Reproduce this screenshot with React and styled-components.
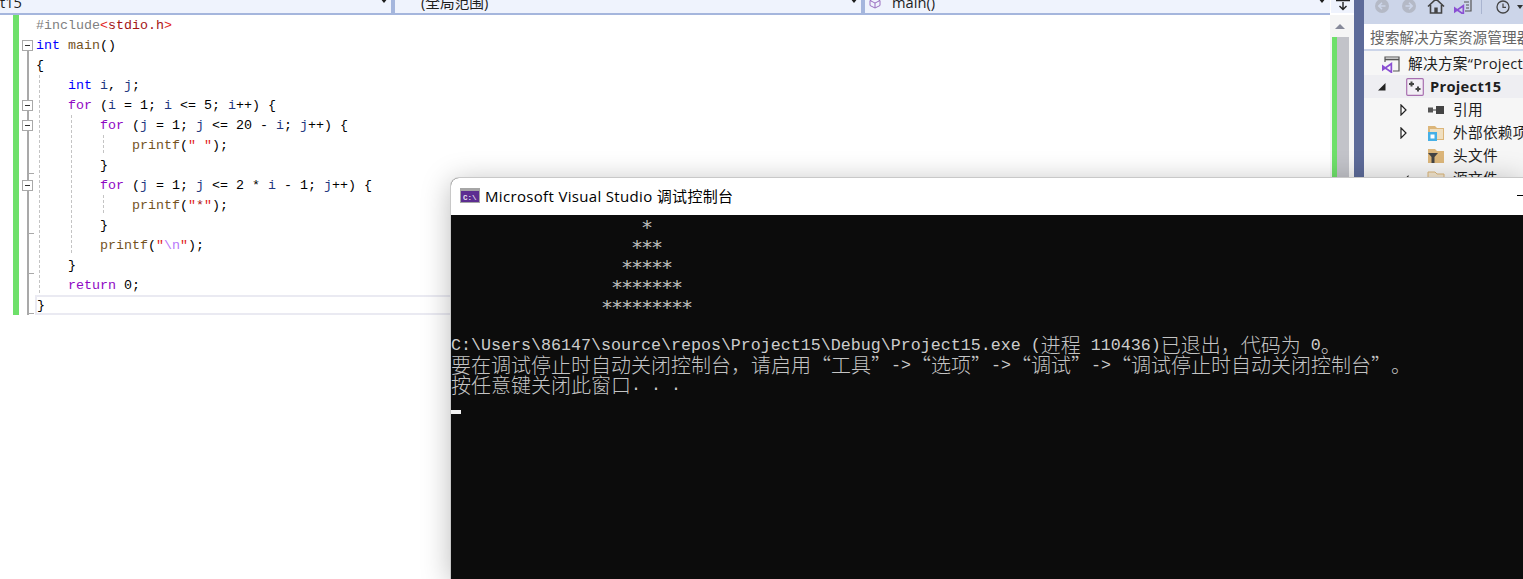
import React from 'react';
import styled, { createGlobalStyle } from 'styled-components';

const GlobalStyle = createGlobalStyle`
  html, body {
    margin: 0;
    padding: 0;
    height: 100%;
    overflow: hidden;
    background: #fff;
    text-spacing-trim: space-all;
  }
`;

const uiFont = `"Open Sans", "Noto Sans CJK SC", sans-serif`;

const tokenColors = {
  kw: '#0000ff',
  ctl: '#8f08c4',
  fn: '#74531f',
  v: '#1f377f',
  str: '#a31515',
  q: '#e21f1f',
  esc: '#b776fb',
  pre: '#808080',
  p: '#000',
};

const Desktop = styled.div`
  position: relative;
  display: flex;
  height: 100vh;
  overflow: hidden;
  background: #fff;
`;

const EditorPane = styled.div`
  display: flex;
  width: 1354px;
  flex: none;
`;

const EditorMain = styled.div`
  flex: 1;
  min-width: 0;
  display: flex;
  flex-direction: column;
`;

const NavBar = styled.div`
  display: flex;
  height: 15px;
  flex: none;
  box-sizing: border-box;
  border-bottom: 2px solid #a5b6dd;
  background: #eff3fd;
  overflow: hidden;
`;

const Combo = styled.div`
  width: ${p => p.$width}px;
  flex: none;
  display: flex;
  align-items: flex-end;
  box-sizing: border-box;
  padding: 0 ${p => p.$right}px 0 ${p => p.$left}px;
  font: 14.67px/19px ${uiFont};
  color: #1e1e1e;
  white-space: nowrap;
  border-right: 4px solid #a5b6dd;
  &:last-child { border-right: 0; }
`;

const ComboText = styled.span`
  flex: 1;
  margin-bottom: 1px;
`;

const ComboCaret = styled.i`
  width: 0;
  height: 0;
  margin-bottom: 10px;
  border-left: 4px solid transparent;
  border-right: 4px solid transparent;
  border-top: 5px solid #1e1e1e;
`;

const MethodIcon = styled.svg`
  width: 12px;
  height: 12px;
  margin: 0 11px 4px 0;
  flex: none;
`;

const EditorBody = styled.div`
  display: flex;
  padding-left: 13px;
  align-items: flex-start;
`;

const ChangeBar = styled.div`
  width: 6px;
  flex: none;
  height: 300px;
  background: #6ee06a;
`;

const FoldColumn = styled.div`
  width: 16px;
  flex: none;
  display: flex;
  flex-direction: column;
`;

const FoldCell = styled.div`
  height: 20px;
  display: flex;
  align-items: center;
  justify-content: flex-start;
  padding-left: 3px;
  background-repeat: no-repeat;
  background-image:
    ${p => (p.$line ? 'linear-gradient(#a9a9a9, #a9a9a9)' : 'none')},
    ${p => (p.$end ? 'linear-gradient(#a9a9a9, #a9a9a9)' : 'none')};
  background-size: 2px 100%, 6px 1px;
  background-position: 8px ${p => (p.$start ? '12px' : '0')}, 9px 18px;
`;

const FoldBox = styled.span`
  width: 11px;
  height: 11px;
  box-sizing: border-box;
  border: 1px solid #a9a9a9;
  background: #fff;
  display: flex;
  align-items: center;
  justify-content: center;
  &::after {
    content: '';
    width: 5px;
    height: 1px;
    background: #333;
  }
`;

const CodeColumn = styled.div`
  flex: 1;
  min-width: 0;
`;

const CodeLine = styled.div`
  height: 20px;
  box-sizing: border-box;
  display: flex;
  align-items: center;
  white-space: pre;
  padding: 1px 0 0 1px;
  font: 13.33px/18px "Liberation Mono", monospace;
  color: #000;
  ${p => p.$current && `
    border-top: 2px solid #eaeaf2;
    border-bottom: 2px solid #eaeaf2;
    border-left: 2px solid #eaeaf2;
    padding-left: 0;
  `}
`;

const Indent = styled.span`
  width: 32px;
  height: 20px;
  flex: none;
  margin-top: -1px;
  background-image: repeating-linear-gradient(#c4c4c4 0 3px, transparent 3px 5px);
  background-repeat: no-repeat;
  background-size: 1px 100%;
  background-position: 3px 0;
`;

const Tok = styled.span`
  color: ${p => tokenColors[p.$kind]};
`;

const ScrollColumn = styled.div`
  width: 24px;
  flex: none;
  display: flex;
  flex-direction: column;
  align-items: stretch;
  background: #f5f5f5;
`;

const SplitButton = styled.div`
  height: 15px;
  box-sizing: border-box;
  background: #eff3fd;
  border-left: 1px solid #fff;
  border-bottom: 2px solid #fff;
  display: flex;
  justify-content: center;
`;

const ScrollArrow = styled.div`
  height: 22px;
  display: flex;
  align-items: center;
  justify-content: center;
  &::after {
    content: '';
    border-left: 5px solid transparent;
    border-right: 5px solid transparent;
    border-bottom: 5px solid #868999;
    margin-right: 5px;
  }
`;

const ScrollTrack = styled.div`
  flex: 1;
  display: flex;
  margin-left: 2px;
  margin-right: 5px;
  background: #c2c3c9;
  &::before {
    content: '';
    width: 5px;
    background: #6ee06a;
  }
`;

const Splitter = styled.div`
  width: 10px;
  flex: none;
  background: #5d6b99;
`;

const SolutionPanel = styled.div`
  flex: 1;
  min-width: 0;
  display: flex;
  flex-direction: column;
  background: #f6f6f6;
  overflow: hidden;
`;

const PanelToolbar = styled.div`
  height: 24px;
  flex: none;
  box-sizing: border-box;
  padding: 0 0 10px 10px;
  display: flex;
  align-items: flex-end;
  background: #ccd5e9;
  overflow: hidden;
`;

const ToolIcon = styled.svg`
  width: ${p => p.$w || 16}px;
  height: 16px;
  flex: none;
  margin-right: ${p => p.$gap || 0}px;
`;

const ToolSep = styled.i`
  width: 1px;
  height: 24px;
  flex: none;
  margin: 0 13px 0 0;
  background: #a9b4d0;
`;

const ToolCaret = styled.i`
  width: 0;
  height: 0;
  margin: 0 0 5px 6px;
  border-left: 3px solid transparent;
  border-right: 3px solid transparent;
  border-top: 4px solid #333;
`;

const SearchBox = styled.div`
  height: 27px;
  flex: none;
  box-sizing: border-box;
  padding-left: 6px;
  display: flex;
  align-items: center;
  background: #fff;
  border-bottom: 2px solid #ccd5e9;
  white-space: nowrap;
  font: 14.67px/24px ${uiFont};
  color: #666;
`;

const Tree = styled.div`
  padding-top: 1px;
`;

const TreeRow = styled.div`
  height: 23px;
  display: flex;
  align-items: center;
  box-sizing: border-box;
  padding-left: ${p => p.$indent}px;
  white-space: nowrap;
  letter-spacing: 0.3px;
  font: ${p => (p.$bold ? 700 : 400)} 14.67px/23px ${uiFont};
  color: #1e1e1e;
  background: ${p => (p.$selected ? '#eeeef2' : 'transparent')};
`;

const Twist = styled.span`
  width: ${p => p.$w}px;
  flex: none;
  display: flex;
  align-items: center;
`;

const TreeIcon = styled.svg`
  width: 18px;
  height: 18px;
  flex: none;
  margin-right: ${p => p.$gap}px;
`;

const ConsoleWindow = styled.div`
  position: absolute;
  left: 451px;
  top: 178px;
  right: 0;
  bottom: 0;
  display: flex;
  flex-direction: column;
  background: #0c0c0c;
  border-top-left-radius: 8px;
  box-shadow: 0 0 0 1px #c8c8c8, 0 4px 30px rgba(0, 0, 0, 0.28);
  overflow: hidden;
`;

const TitleBar = styled.div`
  height: 37px;
  flex: none;
  box-sizing: border-box;
  padding: 0 0 2px 9px;
  display: flex;
  align-items: center;
  background: #fff;
`;

const TitleIcon = styled.svg`
  width: 20px;
  height: 15px;
  flex: none;
  margin-right: 5px;
`;

const TitleText = styled.span`
  flex: 1;
  font: 15px/20px ${uiFont};
  letter-spacing: 0.33px;
  color: #000;
  white-space: nowrap;
`;

const MinimizeGlyph = styled.i`
  width: 6px;
  height: 1px;
  background: #000;
`;

const ConsoleBody = styled.div`
  padding-top: 1px;
  color: #cccccc;
  font: 16.67px/20px "Liberation Mono", monospace;
`;

const ConsoleLine = styled.div`
  height: 20px;
  white-space: pre;
`;

const StarLine = styled.div`
  height: 20px;
  white-space: pre;
  color: #bdbdbd;
  font: 20px/23px "DejaVu Sans Mono", monospace;
  letter-spacing: -2.04px;
`;

const Cjk = styled.span`
  font: 300 20px/0 "Noto Sans CJK SC", sans-serif;
  vertical-align: -3px;
  color: #c4c4c4;
`;

const Cursor = styled.div`
  width: 10px;
  height: 4px;
  margin-top: 14px;
  background: #f2f2f2;
`;

const codeLines = [
  { indent: 0, toks: [['pre', '#include'], ['q', '<'], ['str', 'stdio.h'], ['q', '>']] },
  { indent: 0, toks: [['kw', 'int'], ['p', ' '], ['fn', 'main'], ['p', '()']] },
  { indent: 0, toks: [['p', '{']] },
  { indent: 1, toks: [['kw', 'int'], ['p', ' '], ['v', 'i'], ['p', ', '], ['v', 'j'], ['p', ';']] },
  { indent: 1, toks: [['ctl', 'for'], ['p', ' ('], ['v', 'i'], ['p', ' = 1; '], ['v', 'i'], ['p', ' <= 5; '], ['v', 'i'], ['p', '++) {']] },
  { indent: 2, toks: [['ctl', 'for'], ['p', ' ('], ['v', 'j'], ['p', ' = 1; '], ['v', 'j'], ['p', ' <= 20 - '], ['v', 'i'], ['p', '; '], ['v', 'j'], ['p', '++) {']] },
  { indent: 3, toks: [['fn', 'printf'], ['p', '('], ['q', '" "'], ['p', ');']] },
  { indent: 2, toks: [['p', '}']] },
  { indent: 2, toks: [['ctl', 'for'], ['p', ' ('], ['v', 'j'], ['p', ' = 1; '], ['v', 'j'], ['p', ' <= 2 * '], ['v', 'i'], ['p', ' - 1; '], ['v', 'j'], ['p', '++) {']] },
  { indent: 3, toks: [['fn', 'printf'], ['p', '('], ['q', '"'], ['str', '*'], ['q', '"'], ['p', ');']] },
  { indent: 2, toks: [['p', '}']] },
  { indent: 2, toks: [['fn', 'printf'], ['p', '('], ['q', '"'], ['esc', '\\n'], ['q', '"'], ['p', ');']] },
  { indent: 1, toks: [['p', '}']] },
  { indent: 1, toks: [['ctl', 'return'], ['p', ' 0;']] },
  { indent: 0, toks: [['p', '}']], current: true },
];

const foldCells = [
  {},
  { box: true, line: true, start: true },
  { line: true },
  { line: true },
  { box: true, line: true },
  { box: true, line: true },
  { line: true },
  { line: true, end: true },
  { box: true, line: true },
  { line: true },
  { line: true, end: true },
  { line: true },
  { line: true, end: true },
  { line: true },
  { line: true, end: true },
];

const starLines = [
  '                   *',
  '                  ***',
  '                 *****',
  '                *******',
  '               *********',
];

const consoleLines = [
  '',
  'C:\\Users\\86147\\source\\repos\\Project15\\Debug\\Project15.exe (进程 110436)已退出，代码为 0。',
  '要在调试停止时自动关闭控制台，请启用“工具”->“选项”->“调试”->“调试停止时自动关闭控制台”。',
  '按任意键关闭此窗口. . .',
];

const renderConsoleText = text =>
  text.split(/([^\x00-\x7f]+)/).map((part, i) =>
    i % 2 ? <Cjk key={i} lang="zh-CN">{part}</Cjk> : part
  );

const VsMark = ({ x = 0, y = 0, s = 1 }) => (
  <path
    transform={`translate(${x} ${y}) scale(${s})`}
    fill="none"
    stroke="#8a4fd3"
    strokeWidth="2"
    d="M1 5 L11 12 V2 L1 9 Z"
  />
);

const FilledArrow = () => (
  <svg width="9" height="9" viewBox="0 0 9 9"><path d="M8.5 1 V8.5 H1 Z" fill="#222" /></svg>
);

const OpenArrow = () => (
  <svg width="7" height="12" viewBox="0 0 7 12"><path d="M1 1 L6 6 L1 11 Z" fill="#fff" stroke="#222" strokeWidth="1.2" /></svg>
);

const App = () => (
  <>
    <GlobalStyle />
    <Desktop>
      <EditorPane>
        <EditorMain>
          <NavBar>
            <Combo $width={395} $left={0} $right={3}>
              <ComboText>t15</ComboText>
              <ComboCaret />
            </Combo>
            <Combo $width={470} $left={26} $right={3}>
              <ComboText>(全局范围)</ComboText>
              <ComboCaret />
            </Combo>
            <Combo $width={465} $left={4} $right={4}>
              <MethodIcon viewBox="0 0 12 12">
                <path d="M6 1 L11 3.5 V8.5 L6 11 L1 8.5 V3.5 Z M1 3.5 L6 6 L11 3.5 M6 6 V11" fill="none" stroke="#9a6fc0" strokeWidth="1" />
              </MethodIcon>
              <ComboText>main()</ComboText>
              <ComboCaret />
            </Combo>
          </NavBar>
          <EditorBody>
            <ChangeBar />
            <FoldColumn>
              {foldCells.map((c, i) => (
                <FoldCell key={i} $line={c.line} $start={c.start} $end={c.end}>
                  {c.box && <FoldBox />}
                </FoldCell>
              ))}
            </FoldColumn>
            <CodeColumn>
              {codeLines.map((line, i) => (
                <CodeLine key={i} $current={line.current}>
                  {Array.from({ length: line.indent }, (_, n) => <Indent key={n} />)}
                  {line.toks.map(([kind, text], n) => <Tok key={n} $kind={kind}>{text}</Tok>)}
                </CodeLine>
              ))}
            </CodeColumn>
          </EditorBody>
        </EditorMain>
        <ScrollColumn>
          <SplitButton>
            <svg width="14" height="13" viewBox="0 0 14 13">
              <path d="M0 0.5 H14 M7 2 V9 M3.5 6 L7 9.5 L10.5 6" fill="none" stroke="#222" strokeWidth="1.4" />
            </svg>
          </SplitButton>
          <ScrollArrow />
          <ScrollTrack />
        </ScrollColumn>
      </EditorPane>
      <Splitter />
      <SolutionPanel>
        <PanelToolbar>
          <ToolIcon $gap={11} viewBox="0 0 16 16">
            <circle cx="8" cy="8" r="7" fill="#b4b9c6" />
            <path d="M11.5 8 H5 M8 4.8 L4.8 8 L8 11.2" fill="none" stroke="#ccd5e9" strokeWidth="1.6" />
          </ToolIcon>
          <ToolIcon $gap={10} viewBox="0 0 16 16">
            <circle cx="8" cy="8" r="7" fill="#b4b9c6" />
            <path d="M4.5 8 H11 M8 4.8 L11.2 8 L8 11.2" fill="none" stroke="#ccd5e9" strokeWidth="1.6" />
          </ToolIcon>
          <ToolIcon $w={18} $gap={9} viewBox="0 0 18 16">
            <path d="M1 8.5 L9 1 L17 8.5 M3.5 7 V15 H14.5 V7" fill="none" stroke="#444" strokeWidth="1.6" />
            <rect x="7.3" y="9.5" width="3.4" height="5.5" fill="#444" />
          </ToolIcon>
          <ToolIcon $w={18} $gap={9} viewBox="0 0 18 16">
            <path d="M8 1 H17 V13 H11" fill="#ccd5e9" stroke="#555" strokeWidth="1.2" />
            <path d="M10 4 H15 M12 7 H15 M12 10 H15" stroke="#555" strokeWidth="1" />
            <VsMark x={0} y={6} s={0.85} />
          </ToolIcon>
          <ToolSep />
          <ToolIcon $w={16} viewBox="0 0 16 16">
            <circle cx="8" cy="9" r="6" fill="none" stroke="#444" strokeWidth="1.3" />
            <path d="M8 5.5 V9.3 H11" fill="none" stroke="#444" strokeWidth="1.2" />
          </ToolIcon>
          <ToolCaret />
        </PanelToolbar>
        <SearchBox lang="zh-CN">搜索解决方案资源管理器</SearchBox>
        <Tree lang="zh-CN">
          <TreeRow $indent={18}>
            <TreeIcon $gap={8} viewBox="0 0 18 18">
              <path d="M3 7 V2 H17 V16 H11" fill="none" stroke="#555" strokeWidth="1.2" />
              <path d="M3 4.5 H17" stroke="#555" strokeWidth="1.6" />
              <VsMark x={0} y={7} s={0.85} />
            </TreeIcon>
            解决方案“Project15”
          </TreeRow>
          <TreeRow $indent={13} $bold $selected>
            <Twist $w={29}><FilledArrow /></Twist>
            <TreeIcon $gap={6} viewBox="0 0 18 18">
              <rect x="0.7" y="0.7" width="16.6" height="16.6" rx="1" fill="#f2eef5" stroke="#a86fb0" strokeWidth="1.2" />
              <path d="M5.5 3.5 V8.5 M3 6 H8 M12 8.5 V13.5 M9.5 11 H14.5" stroke="#444" strokeWidth="2" />
            </TreeIcon>
            Project15
          </TreeRow>
          <TreeRow $indent={36}>
            <Twist $w={27}><OpenArrow /></Twist>
            <TreeIcon $gap={8} viewBox="0 0 18 18">
              <rect x="1" y="6.5" width="5" height="5" fill="#555" />
              <rect x="9" y="5" width="8" height="8" fill="#444" />
              <path d="M6 9 H9" stroke="#555" strokeWidth="1.2" />
            </TreeIcon>
            引用
          </TreeRow>
          <TreeRow $indent={36}>
            <Twist $w={27}><OpenArrow /></Twist>
            <TreeIcon $gap={8} viewBox="0 0 18 18">
              <path d="M1 2 H8 L10 4 H17 V16 H1 Z" fill="#dcb67a" />
              <path d="M3 5 H16 V15 H3 Z" fill="#f0dfc0" />
              <rect x="1" y="8" width="9" height="9" fill="#46b0e6" />
              <rect x="3.5" y="10.5" width="4" height="4" fill="#fff" />
            </TreeIcon>
            外部依赖项
          </TreeRow>
          <TreeRow $indent={63}>
            <TreeIcon $gap={8} viewBox="0 0 18 18">
              <path d="M1 2 H8 L10 4 H17 V16 H1 Z" fill="#dcb67a" />
              <path d="M1 6 H11 L7.5 10 V16 H4.5 V10 Z" fill="#444" />
            </TreeIcon>
            头文件
          </TreeRow>
          <TreeRow $indent={36}>
            <Twist $w={27}><FilledArrow /></Twist>
            <TreeIcon $gap={8} viewBox="0 0 18 18">
              <path d="M1 2 H8 L10 4 H17 V16 H1 Z" fill="#f3e6cf" stroke="#dcb67a" />
            </TreeIcon>
            源文件
          </TreeRow>
        </Tree>
      </SolutionPanel>
      <ConsoleWindow>
        <TitleBar>
          <TitleIcon viewBox="0 0 20 15">
            <rect width="20" height="15" fill="#a6a6a6" />
            <rect x="1" y="3" width="18" height="11" fill="#5c2d91" />
            <text x="3" y="11.5" fontFamily="Liberation Mono, monospace" fontWeight="700" fontSize="7.5" fill="#e8e0f0">C:\</text>
          </TitleIcon>
          <TitleText lang="zh-CN">Microsoft Visual Studio 调试控制台</TitleText>
          <MinimizeGlyph />
        </TitleBar>
        <ConsoleBody>
          {starLines.map((text, i) => (
            <StarLine key={i}>{text}</StarLine>
          ))}
          {consoleLines.map((text, i) => (
            <ConsoleLine key={i}>{renderConsoleText(text)}</ConsoleLine>
          ))}
          <Cursor />
        </ConsoleBody>
      </ConsoleWindow>
    </Desktop>
  </>
);

export default App;
